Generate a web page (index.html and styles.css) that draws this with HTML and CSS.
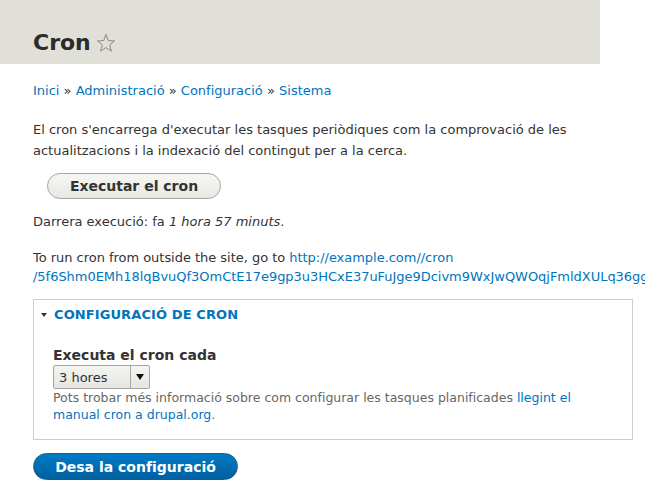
FILE: index.html
```html
<!DOCTYPE html>
<html lang="ca">
<head>
<meta charset="utf-8">
<title>Cron</title>
<link rel="stylesheet" href="styles.css">
</head>
<body>
<header class="page-header">
  <h1 class="title">Cron <span class="star"><svg width="20" height="20" viewBox="0 0 20 20"><path d="M10 1.5 L12.3 7.6 L18.6 7.9 L13.7 11.9 L15.4 18.2 L10 14.6 L4.6 18.2 L6.3 11.9 L1.4 7.9 L7.7 7.6 Z" fill="none" stroke="#8a8a80" stroke-width="1"/></svg></span></h1>
</header>
<main class="content">
  <nav class="breadcrumb"><a href="#">Inici</a> » <a href="#">Administració</a> » <a href="#">Configuració</a> » <a href="#">Sistema</a></nav>
  <p class="intro">El cron s'encarrega d'executar les tasques periòdiques com la comprovació de les actualitzacions i la indexació del contingut per a la cerca.</p>
  <div class="run-row"><button class="btn">Executar el cron</button></div>
  <p class="last">Darrera execució: fa <em>1 hora 57 minuts</em>.</p>
  <p class="outside">To run cron from outside the site, go to <a href="#">http://example.com//cron<br>/5f6Shm0EMh18lqBvuQf3OmCtE17e9gp3u3HCxE37uFuJge9Dcivm9WxJwQWOqjFmldXULq36gg</a></p>
  <fieldset class="settings">
    <div class="legend"><span class="tri"></span><span class="legend-text">CONFIGURACIÓ DE CRON</span></div>
    <div class="field">
      <label class="label">Executa el cron cada</label>
      <div class="select"><span class="select-value">3 hores</span><span class="select-arrow"></span></div>
      <div class="desc">Pots trobar més informació sobre com configurar les tasques planificades <a href="#">llegint el manual cron a drupal.org</a>.</div>
    </div>
  </fieldset>
  <button class="btn btn-primary">Desa la configuració</button>
</main>
</body>
</html>
```
FILE: styles.css
```css
html, body {
  margin: 0;
  padding: 0;
  background: #fff;
}
body {
  font-family: "DejaVu Sans", sans-serif;
  font-size: 13px;
  color: #333;
  width: 645px;
  overflow: hidden;
}
a {
  color: #0074bd;
  text-decoration: none;
}
.page-header {
  width: 600px;
  height: 64px;
  background: #e0e0d8;
  box-sizing: border-box;
  padding: 28px 0 0 33px;
}
.title {
  margin: 0;
  font-size: 22px;
  font-weight: bold;
  line-height: 30px;
  color: #2b2b2b;
  display: flex;
  align-items: center;
  gap: 5px;
}
.star {
  display: inline-flex;
}
.content {
  padding: 18px 0 0 33px;
}
.breadcrumb {
  line-height: 17px;
}
.intro {
  margin: 20px 0 0;
  line-height: 21px;
  width: 560px;
}
.run-row {
  margin-top: 12px;
  padding-left: 14px;
}
.btn {
  font-family: inherit;
  font-size: 14px;
  font-weight: bold;
  color: #333;
  border: 1px solid #a6a6a6;
  border-radius: 20px;
  background: linear-gradient(#f6f6f3, #e8e8e3);
  padding: 0;
  height: 26px;
  width: 174px;
  cursor: pointer;
}
.last {
  margin: 14px 0 0;
  line-height: 17px;
}
.outside {
  margin: 18px 0 0;
  line-height: 19px;
  white-space: nowrap;
  letter-spacing: -0.03px;
}
.settings {
  margin: 13px 0 0;
  width: 600px;
  box-sizing: border-box;
  border: 1px solid #ccc;
  padding: 0;
  height: 141px;
  min-width: 0;
}
.legend {
  display: flex;
  align-items: center;
  padding: 6px 0 0 7px;
  height: 17px;
}
.tri {
  width: 0;
  height: 0;
  border-left: 3px solid transparent;
  border-right: 3px solid transparent;
  border-top: 4px solid #333;
  margin-right: 7px;
}
.legend-text {
  color: #0074bd;
  font-weight: bold;
  font-size: 13px;
  letter-spacing: 0.1px;
}
.field {
  padding: 24px 0 0 19px;
}
.label {
  display: block;
  font-weight: bold;
  font-size: 14px;
  line-height: 17px;
}
.select {
  margin-top: 1px;
  width: 97px;
  height: 24px;
  box-sizing: border-box;
  border: 1px solid #a6a6a6;
  border-radius: 2px;
  background: linear-gradient(#f4f4f1, #e6e6e1);
  display: flex;
  align-items: center;
}
.select-value {
  flex: 1;
  padding-left: 5px;
  font-size: 13px;
}
.select-arrow {
  width: 18px;
  height: 22px;
  border-left: 1px solid #a6a6a6;
  position: relative;
}
.select-arrow::after {
  content: "";
  position: absolute;
  left: 5px;
  top: 8px;
  border-left: 4px solid transparent;
  border-right: 4px solid transparent;
  border-top: 6px solid #111;
}
.desc {
  margin-top: 0;
  font-size: 12.5px;
  color: #666;
  line-height: 17px;
  width: 540px;
}
.btn-primary {
  margin-top: 13px;
  width: 205px;
  height: 27px;
  color: #fff;
  border-color: #1e5c90;
  background: linear-gradient(#007bc6, #0060a0);
}
```
